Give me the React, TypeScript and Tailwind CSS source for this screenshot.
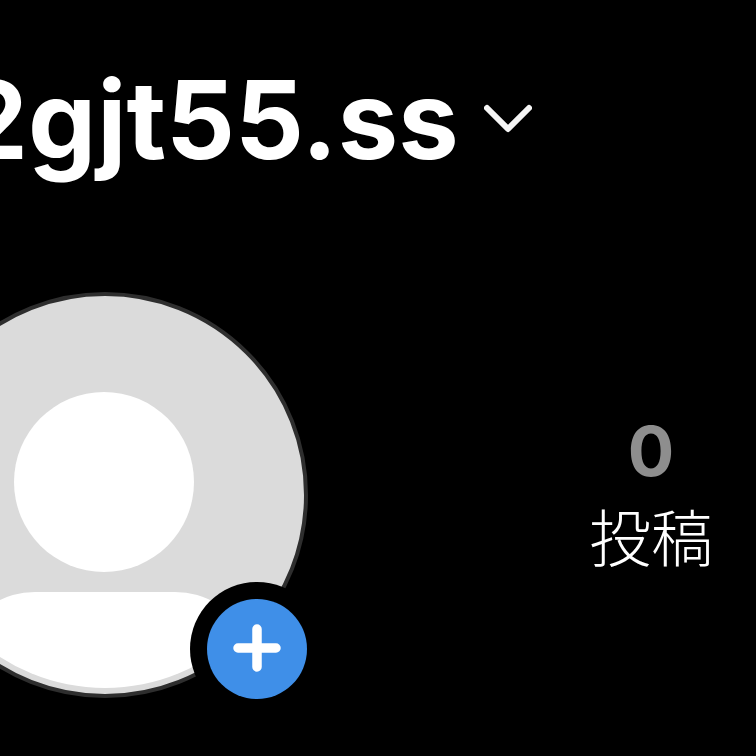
export default function App() {
  return (
    <div className="w-[756px] h-[756px] bg-black overflow-hidden text-white flex flex-col">
      <div className="flex items-center h-[140px] mt-[50px] ml-[-40px]">
        <span className="font-['Inter',sans-serif] font-bold text-[108px] leading-none tracking-normal whitespace-nowrap">2gjt55.ss</span>
        <svg className="ml-[25px] mt-[0px] shrink-0" width="48" height="32" viewBox="0 0 48 32" fill="none">
          <path d="M3 4 L24 25 L45 4" stroke="#f5f5f5" strokeWidth="6" strokeLinecap="round" strokeLinejoin="round" />
        </svg>
      </div>
      <div className="flex items-start mt-[103px] ml-[-97px]">
        <div className="relative w-[404px] h-[404px] shrink-0">
          <svg className="overflow-visible" width="404" height="404" viewBox="0 0 404 404">
            <defs>
              <clipPath id="av">
                <circle cx="202" cy="202" r="193" />
              </clipPath>
            </defs>
            <circle cx="202" cy="202" r="201" fill="#dbdbdb" stroke="#2e2e2e" strokeWidth="4" />
            <circle cx="201" cy="189" r="90" fill="#ffffff" />
            <g clipPath="url(#av)">
              <rect x="74" y="299" width="256" height="140" rx="58" ry="40" fill="#ffffff" />
            </g>
          </svg>
          <div className="absolute left-[287px] top-[289px] w-[134px] h-[134px] rounded-full bg-black flex items-center justify-center">
            <div className="w-[100px] h-[100px] rounded-full bg-[#3f8fe8] flex items-center justify-center">
              <svg className="mt-[-2px]" width="50" height="50" viewBox="0 0 50 50">
                <path d="M25 6 V44 M6 25 H44" stroke="#ffffff" strokeWidth="9.5" strokeLinecap="round" />
              </svg>
            </div>
          </div>
        </div>
        <div className="flex flex-col items-center ml-[274px] mt-[117px] w-[140px]">
          <span className="font-['Inter',sans-serif] font-bold text-[69px] leading-[82px] text-[#8e8e8e]">0</span>
          <span className="font-['Noto_Sans_CJK_JP',sans-serif] font-light text-[62px] leading-[70px] mt-[8px]">投稿</span>
        </div>
      </div>
    </div>
  );
}
